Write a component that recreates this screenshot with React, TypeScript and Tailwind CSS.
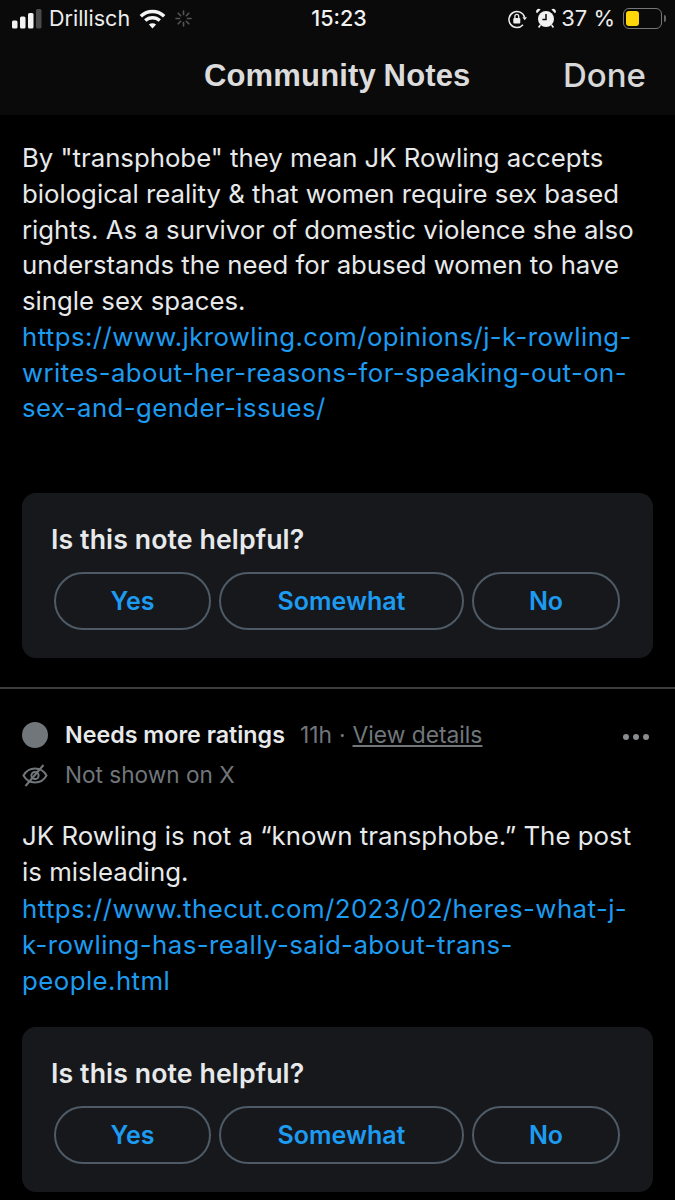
import React from "react";

const sans = "font-['Inter','Liberation_Sans',sans-serif]";

const SignalBars = () => (
  <svg width="30" height="20" viewBox="0 0 30 20" fill="none">
    <rect x="0" y="11.5" width="5.5" height="8" rx="1.5" fill="#f2f2f2" />
    <rect x="8" y="7.5" width="5.5" height="12" rx="1.5" fill="#f2f2f2" />
    <rect x="16" y="4" width="5.5" height="15.5" rx="1.5" fill="#f2f2f2" />
    <rect x="24" y="0" width="5.5" height="19.5" rx="1.5" fill="#4a4a4a" />
  </svg>
);

const Wifi = () => (
  <svg width="27" height="20" viewBox="0 0 27 20" fill="none" stroke="#f5f5f5" strokeWidth="3.4">
    <path d="M1.8 7.2C8.4 .9 18.6 .9 25.2 7.2" />
    <path d="M6.2 11.6C10.4 7.7 16.6 7.7 20.8 11.6" />
    <path d="M13.5 19.4L9.9 15.6C12 13.8 15 13.8 17.1 15.6Z" fill="#f5f5f5" stroke="none" />
  </svg>
);

const Spinner = () => (
  <svg width="17" height="17" viewBox="0 0 17 17" stroke="#555" strokeWidth="1.6" strokeLinecap="round">
    <path d="M8.5 1v3.5M8.5 12.5V16M1 8.5h3.5M12.5 8.5H16M3.2 3.2l2.5 2.5M11.3 11.3l2.5 2.5M3.2 13.8l2.5-2.5M11.3 5.7l2.5-2.5" />
  </svg>
);

const RotationLock = () => (
  <svg width="20" height="20" viewBox="0 0 20 20" fill="none">
    <path d="M17.6 8.2A8 8 0 1 0 16 15.8" stroke="#eee" strokeWidth="1.5" />
    <path d="M15.4 8.2h4.6l-2.3 3z" fill="#eee" />
    <rect x="6.3" y="9" width="7" height="5.4" rx="1" fill="#eee" />
    <path d="M7.9 9V7.3a1.9 1.9 0 0 1 3.8 0V9" stroke="#eee" strokeWidth="1.3" />
  </svg>
);

const Alarm = () => (
  <svg width="20" height="21" viewBox="0 0 20 21" fill="none">
    <circle cx="10" cy="11" r="8" fill="#f2f2f2" />
    <path d="M10 6v5.6H6.4" stroke="#0a0a0a" strokeWidth="1.5" />
    <path d="M1 5.2 4.6 1.6A2.5 2.5 0 0 0 1 5.2ZM19 5.2l-3.6-3.6A2.5 2.5 0 0 1 19 5.2Z" fill="#f2f2f2" />
    <path d="M4.4 17 2.6 19.4M15.6 17l1.8 2.4" stroke="#f2f2f2" strokeWidth="1.6" />
  </svg>
);

const Battery = () => (
  <div className="flex items-center gap-[2px]">
    <div className="w-[39px] h-[21px] rounded-[6px] border border-[#777] p-[2px]">
      <div className="w-[13px] h-full rounded-[3px] bg-[#ffd60a]" />
    </div>
    <div className="w-[2px] h-[7px] rounded-r-sm bg-[#666]" />
  </div>
);

const EyeOff = () => (
  <svg width="26" height="26" viewBox="0 0 26 26" fill="none" stroke="#71767b" strokeWidth="2">
    <path d="M1.5 13.5C4 9 8 6.5 13 6.5s9 2.5 11.5 7C22 18 18 20.5 13 20.5S4 18 1.5 13.5Z" />
    <circle cx="13" cy="13.5" r="3.6" />
    <path d="M21.5 3 3.5 24" />
  </svg>
);

const Helpful = () => (
  <div className="bg-[#16181c] rounded-[14px] pt-[29px] pr-[33px] pb-[28px] pl-[32px]">
    <p className="-ml-[3px] text-[#e7e9ea] text-[26.7px] tracking-[0.1px] leading-[35px] font-semibold whitespace-nowrap">Is this note helpful?</p>
    <div className="mt-[15px] flex gap-[8px]">
      <button className="w-[157px] h-[58px] pt-[1px] rounded-full border-2 border-[#4e5a65] text-[#1d9bf0] text-[25px] font-semibold">Yes</button>
      <button className="w-[245px] h-[58px] pt-[1px] rounded-full border-2 border-[#4e5a65] text-[#1d9bf0] text-[25px] font-semibold">Somewhat</button>
      <button className="w-[148px] h-[58px] pt-[1px] rounded-full border-2 border-[#4e5a65] text-[#1d9bf0] text-[25px] font-semibold">No</button>
    </div>
  </div>
);

const Link = ({ children }: { children: React.ReactNode }) => (
  <span className="text-[#1d9bf0] block tracking-[0.42px]">{children}</span>
);

export default function App() {
  return (
    <div className={`w-[675px] h-[1200px] overflow-hidden bg-black ${sans}`}>
      {/* status bar + nav */}
      <div className="h-[115px] bg-[#0a0a0a]">
        <div className="h-[37px] flex items-center pl-[12px] pr-[9px] text-[#ededed] text-[21.5px]">
          <div className="flex-1 flex items-center">
            <SignalBars />
            <span className="ml-[7px]">Drillisch</span>
            <span className="ml-[9px]"><Wifi /></span>
            <span className="ml-[9px]"><Spinner /></span>
          </div>
          <span className="font-medium text-[#f2f2f2]">15:23</span>
          <div className="flex-1 flex items-center justify-end">
            <RotationLock />
            <span className="ml-[9px]"><Alarm /></span>
            <span className="ml-[5px] text-[22px]">37 %</span>
            <span className="ml-[8px]"><Battery /></span>
          </div>
        </div>
        <div className="h-[78px] flex items-center">
          <span className="ml-[204px] text-[#dcdcdc] text-[31px] tracking-[0.15px] [word-spacing:-1px] font-['Liberation_Sans',sans-serif] font-bold whitespace-nowrap">Community Notes</span>
          <span className="ml-auto mr-[29px] text-[#d8d8d8] text-[33px] font-medium">Done</span>
        </div>
      </div>

      <div className="px-[22px]">
        <div className="pt-[25px] text-[#e7e9ea] text-[25.75px] leading-[35.75px] whitespace-nowrap">
          <p>By "transphobe" they mean JK Rowling accepts</p>
          <p>biological reality &amp; that women require sex based</p>
          <p>rights. As a survivor of domestic violence she also</p>
          <p>understands the need for abused women to have</p>
          <p>single sex spaces.</p>
          <Link>https://www.jkrowling.com/opinions/j-k-rowling-</Link>
          <Link>writes-about-her-reasons-for-speaking-out-on-</Link>
          <Link>sex-and-gender-issues/</Link>
        </div>
        <div className="mt-[67px]">
          <Helpful />
        </div>
      </div>

      <div className="mt-[29px] h-[2px] bg-[#3a3d40]" />

      <div className="px-[22px]">
        <div className="mt-[29px] h-[34px] flex items-center whitespace-nowrap">
          <div className="w-[26px] h-[26px] rounded-full bg-[#71767b]" />
          <span className="ml-[17px] text-[#e7e9ea] text-[23.25px] font-semibold">Needs more ratings</span>
          <span className="ml-[15px] text-[#71767b] text-[22.8px]">11h</span>
          <span className="ml-[7px] text-[#71767b] text-[22.8px]">·</span>
          <span className="ml-[7px] text-[#71767b] text-[22.8px] underline underline-offset-2">View details</span>
          <div className="ml-auto mr-[4px] mt-[3px] flex gap-[4px]">
            <div className="w-[6px] h-[6px] rounded-full bg-[#8a8d90]" />
            <div className="w-[6px] h-[6px] rounded-full bg-[#8a8d90]" />
            <div className="w-[6px] h-[6px] rounded-full bg-[#8a8d90]" />
          </div>
        </div>
        <div className="mt-[6px] h-[34px] flex items-center">
          <EyeOff />
          <span className="ml-[17px] text-[#71767b] text-[22.6px]">Not shown on X</span>
        </div>
        <div className="mt-[26px] text-[#e7e9ea] text-[25.85px] leading-[36.25px] whitespace-nowrap">
          <p>JK Rowling is not a “known transphobe.” The post</p>
          <p>is misleading.</p>
          <Link>https://www.thecut.com/2023/02/heres-what-j-</Link>
          <Link>k-rowling-has-really-said-about-trans-</Link>
          <Link>people.html</Link>
        </div>
        <div className="mt-[28px]">
          <Helpful />
        </div>
      </div>
    </div>
  );
}
